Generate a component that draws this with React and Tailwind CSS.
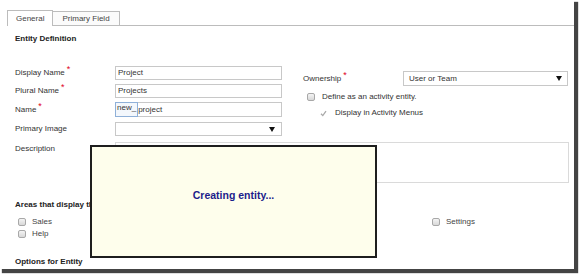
import React from "react";

const font = { fontFamily: '"Liberation Sans", Arial, sans-serif' };

function Req() {
  return <span className="text-[#e0001b] text-[9px] relative -top-[3px] ml-[2px]">*</span>;
}

function Arrow() {
  return (
    <svg width="6" height="5" viewBox="0 0 6 5">
      <polygon points="0,0 6,0 3,5" fill="#111" />
    </svg>
  );
}

function Box() {
  return (
    <span className="inline-block w-[8px] h-[8px] rounded-[2px] border border-[#a8a8a8] bg-gradient-to-b from-[#f4f4f4] to-[#d8d8d8] shrink-0" />
  );
}

function Check({ label }) {
  return (
    <div className="flex items-center h-[12px]">
      <Box />
      <span className="ml-[6px] text-[#444]">{label}</span>
    </div>
  );
}

export default function App() {
  return (
    <div className="w-[579px] h-[275px] bg-white text-[8px] text-[#333]" style={font}>
      <div className="relative w-[574px] h-[269px] bg-white overflow-hidden shadow-[3px_3px_1px_1px_rgba(35,35,35,0.85)]">
        {/* tabs */}
        <div className="flex items-end pt-[10px] pl-[7px]">
          <div className="h-[16px] px-[8px] flex items-center border border-b-0 border-[#bcbcbc] bg-white text-[#444]">
            General
          </div>
          <div className="h-[15px] px-[9px] flex items-center border border-l-0 border-[#bcbcbc] bg-[#fbfbfb] text-[#444]">
            Primary Field
          </div>
          <div className="flex-1 border-b border-[#bcbcbc]" />
        </div>

        <div className="pl-[15px] mt-[8px] font-bold text-[#222] leading-[10px]">Entity Definition</div>

        {/* main fields */}
        <div className="flex mt-[22px]">
          <div className="flex flex-col pl-[15px]">
            <div className="flex items-center h-[14px]">
              <div className="w-[100px]">Display Name<Req /></div>
              <div className="w-[167px] h-[14px] border border-[#c8c8c8] flex items-center pl-[2px]">Project</div>
            </div>
            <div className="flex items-center h-[14px] mt-[4px]">
              <div className="w-[100px]">Plural Name<Req /></div>
              <div className="w-[167px] h-[14px] border border-[#c8c8c8] flex items-center pl-[2px]">Projects</div>
            </div>
            <div className="flex items-center h-[15px] mt-[4px]">
              <div className="w-[100px]">Name<Req /></div>
              <div className="w-[167px] h-[15px] border border-[#c8c8c8] flex items-center">
                <span className="h-[15px] -ml-px -mt-px -mb-px px-[1px] border border-[#8fb0d8] bg-[#f3f7fc] flex items-start leading-[10px]">new_</span>
                <span>project</span>
              </div>
            </div>
            <div className="flex items-center h-[14px] mt-[5px]">
              <div className="w-[100px]">Primary Image</div>
              <div className="w-[167px] h-[14px] border border-[#c8c8c8] flex items-center justify-end pr-[6px]">
                <Arrow />
              </div>
            </div>
          </div>

          <div className="flex flex-col ml-[21px] mt-[5px]">
            <div className="flex items-center h-[15px]">
              <div className="w-[100px]">Ownership<Req /></div>
              <div className="w-[165px] h-[15px] border border-[#c8c8c8] flex items-center justify-between pl-[5px] pr-[5px]">
                <span>User or Team</span>
                <Arrow />
              </div>
            </div>
            <div className="flex items-center h-[12px] mt-[5px] pl-[4px]">
              <Box />
              <span className="ml-[7px]">Define as an activity entity.</span>
            </div>
            <div className="flex items-center h-[12px] mt-[4px] pl-[17px]">
              <svg width="7" height="7" viewBox="0 0 7 7">
                <path d="M1 3.8 L2.8 5.6 L6 1.2" fill="none" stroke="#a9a9a9" strokeWidth="1.3" />
              </svg>
              <span className="ml-[8px]">Display in Activity Menus</span>
            </div>
          </div>
        </div>

        {/* description */}
        <div className="flex mt-[6px] pl-[15px]">
          <div className="w-[100px] pt-[1px]">Description</div>
          <div className="w-[454px] h-[41px] border border-[#dadada]" />
        </div>

        <div className="pl-[15px] mt-[17px] font-bold text-[#222] leading-[10px]">Areas that display this entity</div>

        <div className="grid grid-cols-[138px_138px_138px_138px] pl-[18px] mt-[6px]">
          <Check label="Sales" />
          <Check label="Service" />
          <Check label="Marketing" />
          <Check label="Settings" />
          <Check label="Help" />
        </div>

        <div className="pl-[15px] mt-[17px] font-bold text-[#222] leading-[10px]">Options for Entity</div>

        {/* progress dialog */}
        <div className="absolute left-[90px] top-[145px] w-[287px] h-[113px] border-2 border-[#1e1e1e] bg-[#fefeec] flex items-center justify-center pb-[12px]">
          <span className="font-bold text-[10.5px] text-[#1c1c8a]">Creating entity...</span>
        </div>
      </div>
    </div>
  );
}
